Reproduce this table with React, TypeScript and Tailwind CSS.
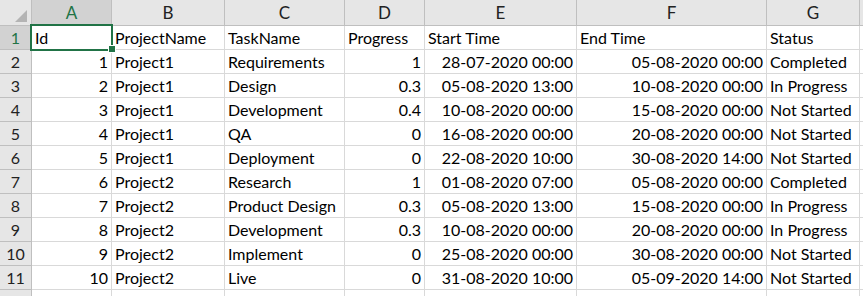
const cols = ["A", "B", "C", "D", "E", "F", "G"];
const widths = ["w-[80px]", "w-[113px]", "w-[120px]", "w-[80px]", "w-[152px]", "w-[190px]", "w-[93px]"];
// which columns are numbers (right aligned)
const rightAlign = [true, false, false, true, true, true, false];

const header = ["Id", "ProjectName", "TaskName", "Progress", "Start Time", "End Time", "Status"];

const rows: string[][] = [
  ["1", "Project1", "Requirements", "1", "28-07-2020 00:00", "05-08-2020 00:00", "Completed"],
  ["2", "Project1", "Design", "0.3", "05-08-2020 13:00", "10-08-2020 00:00", "In Progress"],
  ["3", "Project1", "Development", "0.4", "10-08-2020 00:00", "15-08-2020 00:00", "Not Started"],
  ["4", "Project1", "QA", "0", "16-08-2020 00:00", "20-08-2020 00:00", "Not Started"],
  ["5", "Project1", "Deployment", "0", "22-08-2020 10:00", "30-08-2020 14:00", "Not Started"],
  ["6", "Project2", "Research", "1", "01-08-2020 07:00", "05-08-2020 00:00", "Completed"],
  ["7", "Project2", "Product Design", "0.3", "05-08-2020 13:00", "15-08-2020 00:00", "In Progress"],
  ["8", "Project2", "Development", "0.3", "10-08-2020 00:00", "20-08-2020 00:00", "In Progress"],
  ["9", "Project2", "Implement", "0", "25-08-2020 00:00", "30-08-2020 00:00", "Not Started"],
  ["10", "Project2", "Live", "0", "31-08-2020 10:00", "05-09-2020 14:00", "Not Started"],
];

function RowHeader({ n, active }: { n: string; active?: boolean }) {
  return (
    <div
      className={`w-[32px] shrink-0 h-full flex items-center justify-center pt-[1px] border-r border-b border-[#bfbfbf] text-[16px] ${
        active ? "bg-[#d2d2d2] text-[#217346]" : "bg-[#e6e6e6] text-[#222]"
      }`}
    >
      {n}
    </div>
  );
}

function Cell({ i, text, right }: { i: number; text: string; right?: boolean }) {
  return (
    <div
      className={`${widths[i]} shrink-0 h-full flex items-end pb-[3px] px-[3px] border-r border-b border-[#d9d9d9] whitespace-nowrap overflow-visible ${
        right ? "justify-end" : "justify-start"
      }`}
    >
      {text}
    </div>
  );
}

export default function App() {
  return (
    <div className="relative w-[863px] h-[296px] overflow-hidden bg-white text-[16px] text-black font-['Lato',sans-serif] leading-none">
      {/* column headers */}
      <div className="flex h-[26px]">
        <div className="w-[32px] shrink-0 h-full bg-[#e6e6e6] border-r border-b border-[#bfbfbf] relative">
          <svg className="absolute left-[15px] top-[10px]" width="12" height="12" viewBox="0 0 12 12">
            <polygon points="12,0 12,12 0,12" fill="#b4b4b4" />
          </svg>
        </div>
        {cols.map((c, i) => (
          <div
            key={c}
            className={`${widths[i]} shrink-0 h-full flex items-center justify-center border-r text-[17px] ${
              i === 0
                ? "bg-[#d2d2d2] text-[#217346] border-b-2 border-b-[#217346] border-r-[#bfbfbf]"
                : "bg-[#e6e6e6] text-[#222] border-b border-[#bfbfbf]"
            }`}
          >
            {c}
          </div>
        ))}
        <div className="flex-1 h-full bg-[#e6e6e6] border-b border-[#bfbfbf]" />
      </div>

      {/* row 1 - headers */}
      <div className="flex h-[24px]">
        <RowHeader n="1" active />
        {header.map((h, i) => (
          <Cell key={h} i={i} text={h} />
        ))}
        <div className="flex-1 h-full border-b border-[#d9d9d9]" />
      </div>

      {rows.map((r, ri) => (
        <div key={ri} className="flex h-[24px]">
          <RowHeader n={String(ri + 2)} />
          {r.map((v, i) => (
            <Cell key={i} i={i} text={v} right={rightAlign[i]} />
          ))}
          <div className="flex-1 h-full border-b border-[#d9d9d9]" />
        </div>
      ))}

      {/* partial row 12 */}
      <div className="flex h-[24px]">
        <div className="w-[32px] shrink-0 h-full bg-[#e6e6e6] border-r border-[#bfbfbf]" />
        {cols.map((c, i) => (
          <div key={c} className={`${widths[i]} shrink-0 h-full border-r border-[#d9d9d9]`} />
        ))}
      </div>

      {/* selection A1 */}
      <div className="absolute left-[30px] top-[24px] w-[83px] h-[27px] border-2 border-[#217346] pointer-events-none" />
      <div className="absolute left-[108px] top-[45px] w-[8px] h-[8px] bg-[#217346] border border-white" />
    </div>
  );
}
